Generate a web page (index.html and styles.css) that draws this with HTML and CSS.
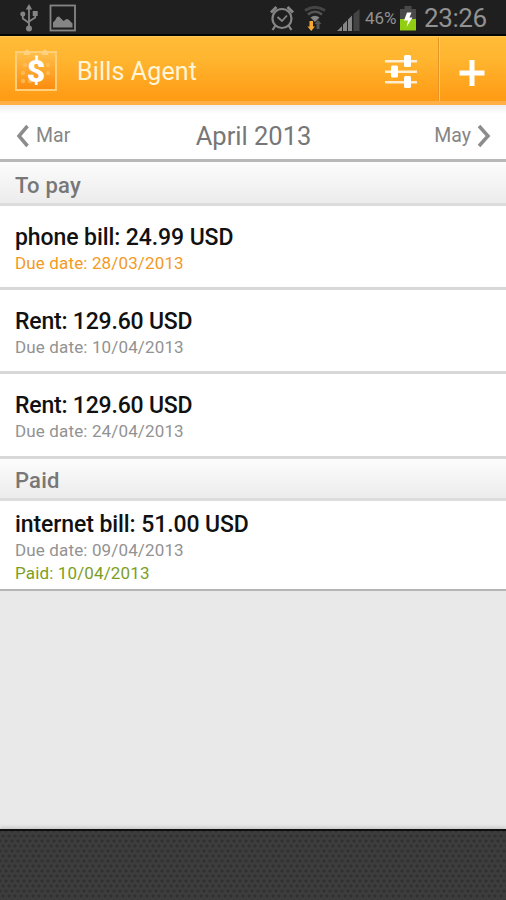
FILE: index.html
```
<!DOCTYPE html>
<html lang="en">
<head>
  <meta charset="UTF-8">
  <meta name="viewport" content="width=device-width, initial-scale=1.0">
  <title>Bills Agent</title>
  <link rel="stylesheet" href="styles.css">
</head>
<body>

  <!-- Status bar -->
  <div class="status-bar">
    <svg class="usb-icon" width="18" height="28" viewBox="0 0 18 28" fill="none" stroke="#858585" stroke-width="1.8">
      <path d="M9 4v20M2.800 10v4.500L9 19M15.200 9v4.500L9 17.500"/>
      <path d="M9 0l3.200 5.500H5.800z" fill="#858585" stroke="none"/>
      <circle cx="2.800" cy="10" r="2.500" fill="#858585" stroke="none"/>
      <path d="M12.700 7h5v5h-5z" fill="#858585" stroke="none"/>
      <circle cx="9" cy="24.500" r="3" fill="#858585" stroke="none"/>
    </svg>
    <svg class="picture-icon" width="28" height="28" viewBox="0 0 28 28">
      <rect x="1.500" y="1.500" width="24.500" height="25" fill="none" stroke="#858585" stroke-width="1.800"/>
      <path d="M4 23.500v-5l2-2 2-3.500 2-.5 4.500 4.500 3-2 2 .5 4 4v4z" fill="#858585"/>
    </svg>
    <div class="status-right">
      <svg class="alarm-icon" width="26" height="28" viewBox="0 0 26 28" fill="none" stroke="#858585" stroke-width="2.2">
        <circle cx="13" cy="14.500" r="9.500"/>
        <path d="M8.500 13l4.500 4 5-5.500" stroke-width="1.800"/>
        <path d="M2 8.500L7.500 3M24 8.500L18.500 3" stroke-width="3"/>
        <path d="M6.500 21.500L3.500 26M19.500 21.500l3 4.500"/>
      </svg>
      <svg class="wifi-icon" width="24" height="28" viewBox="0 0 24 28" fill="none">
        <path d="M2 6.500Q12 0 22 6.500" stroke="#454545" stroke-width="3"/>
        <path d="M5 10.500Q12 5 19 10.500" stroke="#555" stroke-width="2.500"/>
        <path d="M7.500 13.500Q12 10 16.500 13.500L12 18z" fill="#858585"/>
        <path d="M6.500 17h3.500v5.500h2l-3.800 4.500-3.700-4.500h2z" fill="#f7a832"/>
        <path d="M13.500 25v-5h-2l3.500-4 3.500 4h-2v5z" fill="#555"/>
      </svg>
      <svg class="signal-icon" width="24" height="23" viewBox="0 0 24 23" fill="#858585">
        <path d="M0 22l5-5v5zM6 22v-6.500L10 11.500V22zM11 22V10.500L15 6.500V22z"/>
        <path d="M16.500 22V5L22.500 0v22z" fill="#444"/>
      </svg>
      <span class="battery-level">46%</span>
      <svg class="battery-icon" width="18" height="27" viewBox="0 0 18 27">
        <path d="M5.500 1h7v3H17v10.500H1V4h4.500z" fill="#494949"/>
        <path d="M1 14h16v11.500H1z" fill="#91ce12"/>
        <path d="M8 7.500L5 15.500h4L7.500 22l6-9.500H10.500L12.500 7.500z" fill="#fff"/>
      </svg>
      <span class="clock">23:26</span>
    </div>
  </div>

  <!-- Action bar -->
  <div class="action-bar">
    <svg class="logo" width="44" height="44" viewBox="0 0 44 44">
      <defs>
        <linearGradient id="logoFill" x1="0" y1="0" x2="0" y2="1">
          <stop offset="0" stop-color="#ffc14a"/>
          <stop offset="1" stop-color="#fb8b0e"/>
        </linearGradient>
      </defs>
      <rect x="2" y="4" width="40" height="38" fill="url(#logoFill)" stroke="#ffce79" stroke-width="2"/>
      <path d="M10 4q3-5 6 0v3h-6zM28 4q3-5 6 0v3h-6z" fill="#ffd181"/>
      <g fill="#ffc25f" opacity=".7">
        <circle cx="11" cy="17" r="2.200"/><circle cx="34" cy="17" r="2.200"/>
        <circle cx="9" cy="25" r="2.200"/><circle cx="34" cy="25" r="2.200"/>
        <circle cx="9" cy="33" r="2.200"/><circle cx="16" cy="33" r="2.200"/>
      </g>
      <text x="22" y="34" class="logo-sign">$</text>
    </svg>
    <h1>Bills Agent</h1>
    <div class="filter-button">
      <svg width="34" height="34" viewBox="0 0 34 34" fill="#fff">
        <path d="M1 6h32v2.500H1zM1 16.500h32V19H1zM1 27h32v2.500H1z" opacity=".8"/>
        <rect x="20" y="1" width="7" height="12" rx="1.500"/>
        <rect x="7" y="11.500" width="7" height="12" rx="1.500"/>
        <rect x="20" y="22" width="7" height="12" rx="1.500"/>
      </svg>
    </div>
    <div class="add-button">
      <svg width="26" height="28" viewBox="0 0 26 28" fill="none" stroke="#fff" stroke-width="5">
        <path d="M13 1v26M.5 14h25"/>
      </svg>
    </div>
  </div>

  <!-- Month navigation -->
  <div class="month-nav">
    <div class="prev">
      <svg width="14" height="24" viewBox="0 0 14 24" fill="none" stroke="#8c8c8c" stroke-width="3.500"><path d="M11.500 2L3 12l8.500 10"/></svg>
      <span>Mar</span>
    </div>
    <span class="month">April 2013</span>
    <div class="next">
      <span>May</span>
      <svg width="14" height="24" viewBox="0 0 14 24" fill="none" stroke="#8c8c8c" stroke-width="3.500"><path d="M2 2l9 10-9 10"/></svg>
    </div>
  </div>

  <!-- Bills -->
  <div class="bills">
    <h2>To pay</h2>
    <div class="bill">
      <p class="name">phone bill: 24.99 USD</p>
      <p class="date overdue">Due date: 28/03/2013</p>
    </div>
    <div class="bill">
      <p class="name rent">Rent: 129.60 USD</p>
      <p class="date">Due date: 10/04/2013</p>
    </div>
    <div class="bill last">
      <p class="name rent">Rent: 129.60 USD</p>
      <p class="date">Due date: 24/04/2013</p>
    </div>
    <h2 class="paid-title">Paid</h2>
    <div class="bill paid-bill">
      <p class="name">internet bill: 51.00 USD</p>
      <p class="date">Due date: 09/04/2013</p>
      <p class="date paid">Paid: 10/04/2013</p>
    </div>
  </div>

  <div class="footer"></div>
</body>
</html>
```

FILE: styles.css
```
/* Basic Reset */
* {
  margin: 0;
  padding: 0;
  box-sizing: border-box;
}

body {
  font-family: Roboto, sans-serif;
  background-color: #e9e9e9;
  height: 900px;
  display: flex;
  flex-direction: column;
  overflow: hidden;
}

svg {
  display: block;
  flex: none;
}

/* Status bar */
.status-bar {
  height: 36px;
  background-color: #1f1f1f;
  border-bottom: 2px solid #050505;
  display: flex;
  align-items: center;
  padding: 2px 19px 0 20px;
  color: #929292;
}

.picture-icon {
  margin-left: 11px;
}

.status-right {
  display: flex;
  align-items: center;
  margin-left: auto;
}

.alarm-icon {
  margin-left: -1px;
}

.wifi-icon {
  margin-left: 8px;
}

.signal-icon {
  margin: 4px 4px 0 10px;
}

.battery-level {
  width: 33px;
  font-size: 17px;
  white-space: nowrap;
}

.battery-icon {
  margin-left: 1px;
}

.clock {
  width: 63px;
  margin-left: 7px;
  font-size: 26px;
  letter-spacing: -0.4px;
  line-height: 30px;
  white-space: nowrap;
}

/* Action bar */
.action-bar {
  height: 69px;
  background: linear-gradient(#ffbc38, #ffb52f 35%, #ff9c16 94%);
  border-top: 1px solid #ffc755;
  border-bottom: 4px solid #ffaf45;
  display: flex;
  align-items: center;
}

.logo {
  margin: 2px 0 0 14px;
}

.logo-sign {
  font-size: 32px;
  font-weight: 900;
  fill: #fff;
  text-anchor: middle;
}

h1 {
  margin: 5px 0 0 19px;
  font-size: 25px;
  font-weight: 400;
  letter-spacing: 0.15px;
  color: #fff5d8;
}

.filter-button {
  height: 100%;
  margin-left: auto;
  padding: 17px 20px 0 0;
}

.add-button {
  height: 100%;
  width: 68px;
  border-left: 1px solid #e69525;
  box-shadow: inset 1px 0 #ffc76a;
  padding: 22px 0 0 20px;
}

/* Month navigation */
.month-nav {
  height: 57px;
  background: linear-gradient(#eee, #fff 9px);
  border-bottom: 3px solid #b8b8b8;
  display: grid;
  grid-template-columns: 1fr auto 1fr;
  align-items: center;
  padding: 7px 15px 0 16px;
  font-size: 19.5px;
  color: #858585;
}

.prev,
.next {
  display: flex;
  align-items: center;
  gap: 6px;
}

.next {
  justify-content: flex-end;
}

.month {
  font-size: 25.5px;
  color: #777;
}

/* Bill list */
h2 {
  height: 44px;
  padding-left: 15px;
  font-size: 22px;
  letter-spacing: 0.2px;
  line-height: 47px;
  font-weight: 500;
  color: #777;
  background: linear-gradient(#fcfcfc, #ececec);
  border-bottom: 3px solid #dcdcdc;
}

.paid-title {
  height: 42px;
  line-height: 43px;
}

.bill {
  height: 84px;
  background-color: #fff;
  border-bottom: 3px solid #d8d8d8;
  padding: 18px 15px 0;
}

.bill.last {
  height: 85px;
}

.name {
  font-size: 23px;
  letter-spacing: -0.09px;
  line-height: 27px;
  font-weight: 500;
  color: #111;
}

.rent {
  letter-spacing: -0.2px;
}

.date {
  font-size: 17px;
  letter-spacing: 0.14px;
  line-height: 23px;
  padding-top: 1px;
  color: #929292;
}

.overdue {
  color: #f39a24;
}

.paid {
  padding-top: 0;
  color: #7c9e1e;
}

.bill.paid-bill {
  height: 90px;
  padding-top: 10px;
  border-bottom: 2px solid #b5b5b5;
}

/* Textured bottom area */
.footer {
  height: 71px;
  margin-top: auto;
  border-top: 2px solid #101010;
  box-shadow: 0 -2px 3px #c8c8c8;
  background-color: #3d3d3d;
  background-image: radial-gradient(circle, #303030 1px, transparent 2px), radial-gradient(circle, #303030 1px, transparent 2px);
  background-size: 6px 10px;
  background-position: 0 0, 3px 5px;
}
```
